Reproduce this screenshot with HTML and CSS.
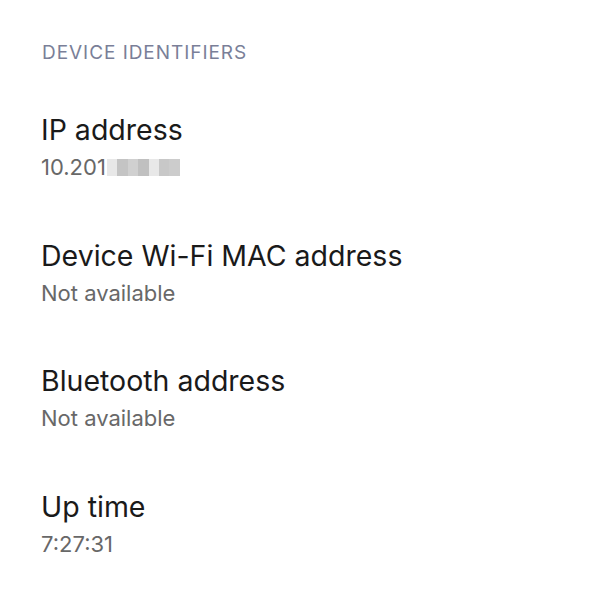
FILE: index.html
```html
<!DOCTYPE html>
<html>
<head>
<meta charset="utf-8">
<link rel="stylesheet" href="styles.css">
</head>
<body>
<div class="page">
  <div class="section-title">DEVICE IDENTIFIERS</div>
  <div class="item">
    <div class="title">IP address</div>
    <div class="summary">10.201<span class="redact"><span class="px c1"></span><span class="px c2 wide"></span><span class="px c3"></span><span class="px c4 wide"></span><span class="px c1"></span><span class="px c5"></span><span class="px c6 wide"></span></span></div>
  </div>
  <div class="item">
    <div class="title">Device Wi-Fi MAC address</div>
    <div class="summary">Not available</div>
  </div>
  <div class="item">
    <div class="title">Bluetooth address</div>
    <div class="summary">Not available</div>
  </div>
  <div class="item">
    <div class="title">Up time</div>
    <div class="summary">7:27:31</div>
  </div>
</div>
</body>
</html>
```

FILE: styles.css
```css
html, body {
  margin: 0;
  padding: 0;
  background: #ffffff;
}
body {
  font-family: Inter, Roboto, sans-serif;
}
.page {
  padding: 39px 42px 0 41px;
  display: flex;
  flex-direction: column;
}
.section-title {
  font-size: 19px;
  line-height: 28px;
  letter-spacing: 0.95px;
  color: #7a7f98;
  margin-bottom: 45px;
  padding-left: 1px;
}
.item {
  height: 125.5px;
  display: flex;
  flex-direction: column;
}
.title {
  font-size: 28.5px;
  line-height: 36px;
  color: #1a1a1a;
}
.summary {
  margin-top: 5px;
  font-size: 22px;
  line-height: 28px;
  color: #686868;
  display: flex;
  align-items: center;
}
.redact {
  display: inline-flex;
  height: 17px;
  margin-left: 1px;
}
.px {
  width: 10px;
  height: 17px;
}
.px.wide { width: 11px; }
.c1 { background: #e8e8e8; }
.c2 { background: #c4c4c4; }
.c3 { background: #d0d0d0; }
.c4 { background: #c0c0c0; }
.c5 { background: #c8c8c8; }
.c6 { background: #cccccc; }
```
